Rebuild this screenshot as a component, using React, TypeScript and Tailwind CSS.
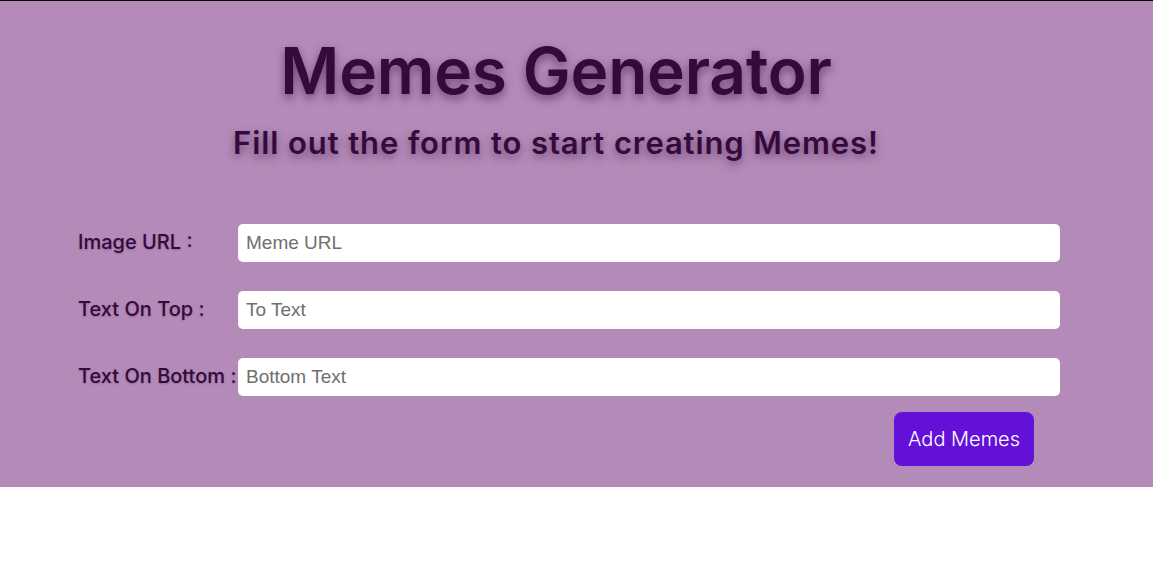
import { useState } from "react";

const fields = [
  { label: "Image URL :", placeholder: "Meme URL", key: "url" },
  { label: "Text On Top :", placeholder: "To Text", key: "top" },
  { label: "Text On Bottom :", placeholder: "Bottom Text", key: "bottom" },
];

export default function App() {
  const [values, setValues] = useState<Record<string, string>>({});

  return (
    <div className="min-h-screen bg-white" style={{ fontFamily: "Inter, 'Noto Sans', sans-serif" }}>
      <div className="h-[487px] border-t border-black bg-[#b48bb8]">
        <div className="w-[1112px] pt-[30px] text-center text-[#340a3d]">
          <h1 className="text-[64px] font-semibold leading-[80px] tracking-[-0.2px] [text-shadow:0_4px_10px_rgba(51,10,61,0.55)]">
            Memes Generator
          </h1>
          <h2 className="mt-[12px] text-[31px] font-semibold leading-[40px] tracking-[0.9px] [text-shadow:0_4px_8px_rgba(51,10,61,0.5)]">
            Fill out the form to start creating Memes!
          </h2>
        </div>

        <form className="mt-[61px] pl-[78px]" onSubmit={(e) => e.preventDefault()}>
          <div className="flex flex-col gap-[29px]">
            {fields.map((f) => (
              <div key={f.key} className="flex items-center">
                <label className="w-[160px] pb-[3px] text-[20px] font-medium tracking-[0px] text-[#340a3d] [text-shadow:0_1px_2px_rgba(51,10,61,0.25)]">
                  {f.label}
                </label>
                <input
                  className="h-[38px] w-[822px] rounded-[5px] bg-white px-[8px] text-[19px] text-gray-800 placeholder:text-[#6f6f6f] outline-none"
                  style={{ fontFamily: "'Liberation Sans', Arial, sans-serif" }}
                  placeholder={f.placeholder}
                  value={values[f.key] ?? ""}
                  onChange={(e) => setValues({ ...values, [f.key]: e.target.value })}
                />
              </div>
            ))}
          </div>
          <div className="mt-[16px] pl-[816px]">
            <button
              type="submit"
              className="h-[54px] w-[140px] rounded-[8px] bg-[#6311d8] text-[20px] font-light text-white"
            >
              Add Memes
            </button>
          </div>
        </form>
      </div>
    </div>
  );
}
